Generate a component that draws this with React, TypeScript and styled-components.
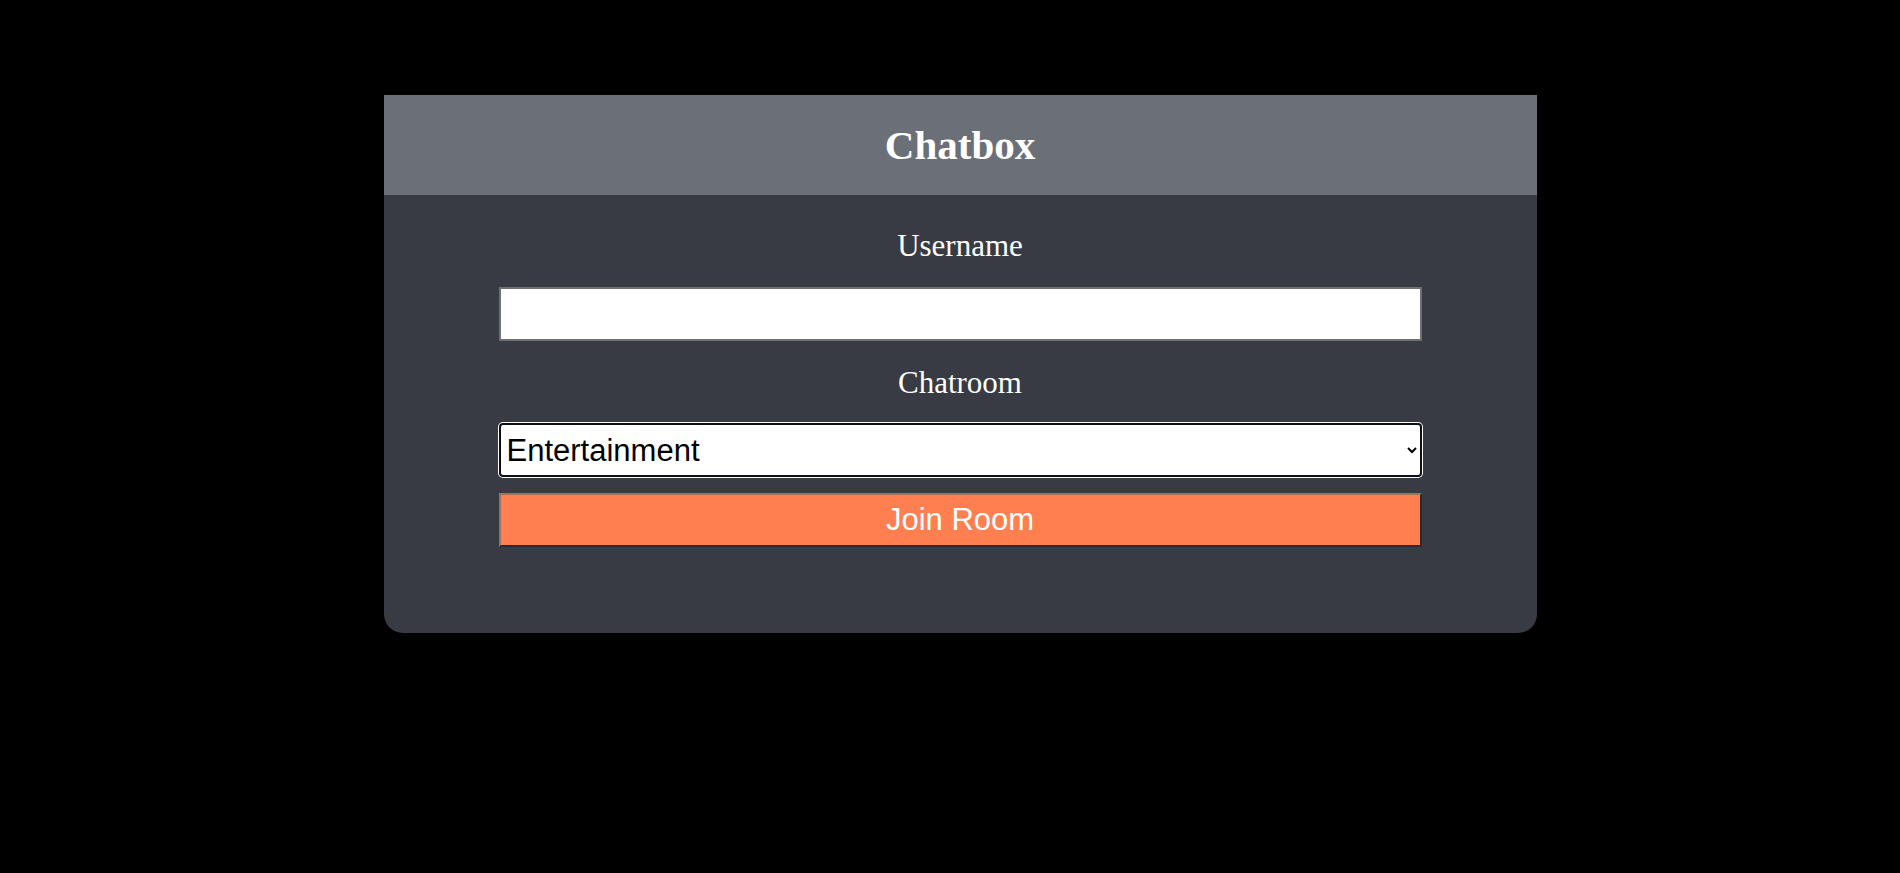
import styled, { createGlobalStyle } from 'styled-components';

const GlobalStyle = createGlobalStyle`
  html, body {
    margin: 0;
    padding: 0;
    background: #000;
    height: 100%;
  }
  #root {
    min-height: 100%;
  }
`;

const Page = styled.div`
  display: flex;
  justify-content: center;
  align-items: flex-start;
  min-height: 873px;
  padding: 95px 0 0 20px;
  box-sizing: border-box;
  background: #000;
`;

const Card = styled.div`
  display: flex;
  flex-direction: column;
  width: 1153px;
  background: #383b43;
  border-radius: 0 0 19px 19px;
  overflow: hidden;
`;

const Header = styled.div`
  display: flex;
  align-items: center;
  justify-content: center;
  height: 100px;
  background: #6b6f78;
`;

const Title = styled.h1`
  margin: 0;
  font-family: 'Liberation Serif', 'Times New Roman', serif;
  font-size: 41px;
  font-weight: 700;
  color: #fff;
`;

const Form = styled.form`
  display: flex;
  flex-direction: column;
  align-items: center;
  padding: 10px 0 86px;
`;

const Label = styled.label`
  display: block;
  margin: 23px 0 23px;
  font-family: 'Liberation Serif', 'Times New Roman', serif;
  font-size: 31px;
  line-height: 36px;
  color: #fff;

  & + input + & {
    margin: 24px 0 22px;
  }
`;

const TextInput = styled.input`
  box-sizing: border-box;
  width: 923px;
  height: 54px;
  margin: 0;
  border: 2px solid #707070;
  background: #fff;
  font-family: 'Liberation Sans', Arial, sans-serif;
  font-size: 31px;
  outline: none;
`;

const Select = styled.select`
  box-sizing: border-box;
  width: 923px;
  height: 54px;
  margin: 0;
  padding: 0 2px;
  border: 2px solid #101010;
  border-radius: 4px;
  box-shadow: 0 0 0 1px #fff;
  background: #fff;
  color: #000;
  font-family: 'Liberation Sans', Arial, sans-serif;
  font-size: 31px;
  outline: none;
`;

const Button = styled.button`
  box-sizing: border-box;
  width: 923px;
  height: 54px;
  margin-top: 16px;
  border: 2px solid;
  border-color: #a2705f #2a2a2a #2a2a2a #a2705f;
  background: #ff7f50;
  color: #fff;
  font-family: 'Liberation Sans', Arial, sans-serif;
  font-size: 31px;
  cursor: pointer;
`;

export default function App() {
  return (
    <>
      <GlobalStyle />
      <Page>
        <Card>
          <Header>
            <Title>Chatbox</Title>
          </Header>
          <Form onSubmit={(e) => e.preventDefault()}>
            <Label htmlFor="username">Username</Label>
            <TextInput id="username" type="text" />
            <Label htmlFor="room">Chatroom</Label>
            <Select id="room" defaultValue="Entertainment">
              <option>Entertainment</option>
              <option>Sports</option>
              <option>Technology</option>
              <option>Music</option>
            </Select>
            <Button type="submit">Join Room</Button>
          </Form>
        </Card>
      </Page>
    </>
  );
}
